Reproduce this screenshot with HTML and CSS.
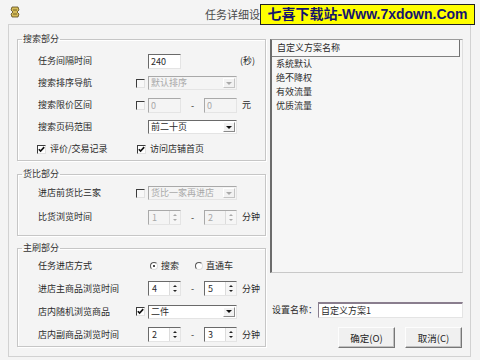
FILE: index.html
```html
<!DOCTYPE html>
<html lang="zh-CN">
<head>
    <meta charset="UTF-8">
    <title>任务详细设置</title>
    <link rel="stylesheet" href="styles.css">
</head>
<body>
    <div class="titlebar">
        <svg class="app-icon" width="10" height="12" viewBox="0 0 10 12">
            <path d="M2 1h6l1 3-2 2 2 2-1 3H2L1 8l2-2-2-2z" fill="#d4bb58" stroke="#5a4a1c" stroke-width="0.8"/>
            <path d="M3 4h4M3 8h4" stroke="#5a4a1c" stroke-width="0.8"/>
        </svg>
        <div class="title">任务详细设置</div>
        <div></div>
        <div class="watermark">七喜下载站-Www.7xdown.Com</div>
    </div>

    <div class="frame">
        <div class="left-col">
            <fieldset class="group g-search">
                <legend>搜索部分</legend>
                <div class="rows">
                    <div class="row">
                        <span class="lbl">任务间隔时间</span><span class="slot"></span>
                        <span class="edit w-num">240</span>
                        <span class="unit sec">(秒)</span>
                    </div>
                    <div class="row">
                        <span class="lbl">搜索排序导航</span>
                        <span class="slot"><span class="cb"></span></span>
                        <span class="combo off"><span class="val">默认排序</span><span class="drop"><span class="tri"></span></span></span>
                    </div>
                    <div class="row">
                        <span class="lbl">搜索限价区间</span>
                        <span class="slot"><span class="cb"></span></span>
                        <span class="edit w-num off">0</span>
                        <span class="dash">-</span>
                        <span class="edit w-num off">0</span>
                        <span class="unit">元</span>
                    </div>
                    <div class="row">
                        <span class="lbl">搜索页码范围</span><span class="slot"></span>
                        <span class="combo"><span class="val">前二十页</span><span class="drop"><span class="tri"></span></span></span>
                    </div>
                    <div class="row">
                        <span class="check-item first">
                            <span class="cb on"><svg width="7" height="7" viewBox="0 0 7 7"><path d="M0.8 3.2l1.8 1.9 3.6-4" fill="none" stroke="#111" stroke-width="1.6"/></svg></span>
                            评价/交易记录
                        </span>
                        <span class="check-item">
                            <span class="cb on"><svg width="7" height="7" viewBox="0 0 7 7"><path d="M0.8 3.2l1.8 1.9 3.6-4" fill="none" stroke="#111" stroke-width="1.6"/></svg></span>
                            访问店铺首页
                        </span>
                    </div>
                </div>
            </fieldset>

            <fieldset class="group g-compare">
                <legend>货比部分</legend>
                <div class="rows">
                    <div class="row tall">
                        <span class="lbl">进店前货比三家</span>
                        <span class="slot"><span class="cb"></span></span>
                        <span class="combo off"><span class="val">货比一家再进店</span><span class="drop"><span class="tri"></span></span></span>
                    </div>
                    <div class="row tall">
                        <span class="lbl">比货浏览时间</span><span class="slot"></span>
                        <span class="spin off"><span class="val">1</span><span class="arrows"><span class="up"></span><span class="down"></span></span></span>
                        <span class="dash">-</span>
                        <span class="spin off"><span class="val">2</span><span class="arrows"><span class="up"></span><span class="down"></span></span></span>
                        <span class="unit">分钟</span>
                    </div>
                </div>
            </fieldset>

            <fieldset class="group g-main">
                <legend>主刷部分</legend>
                <div class="rows">
                    <div class="row mid">
                        <span class="lbl">任务进店方式</span><span class="slot"></span>
                        <span class="radio-item"><span class="rb on"></span>搜索</span>
                        <span class="radio-item"><span class="rb"></span>直通车</span>
                    </div>
                    <div class="row mid">
                        <span class="lbl">进店主商品浏览时间</span><span class="slot"></span>
                        <span class="spin"><span class="val">4</span><span class="arrows"><span class="up"></span><span class="down"></span></span></span>
                        <span class="dash">-</span>
                        <span class="spin"><span class="val">5</span><span class="arrows"><span class="up"></span><span class="down"></span></span></span>
                        <span class="unit">分钟</span>
                    </div>
                    <div class="row mid">
                        <span class="lbl">店内随机浏览商品</span>
                        <span class="slot"><span class="cb on"><svg width="7" height="7" viewBox="0 0 7 7"><path d="M0.8 3.2l1.8 1.9 3.6-4" fill="none" stroke="#111" stroke-width="1.6"/></svg></span></span>
                        <span class="combo"><span class="val">二件</span><span class="drop"><span class="tri"></span></span></span>
                    </div>
                    <div class="row mid">
                        <span class="lbl">店内副商品浏览时间</span><span class="slot"></span>
                        <span class="spin"><span class="val">2</span><span class="arrows"><span class="up"></span><span class="down"></span></span></span>
                        <span class="dash">-</span>
                        <span class="spin"><span class="val">3</span><span class="arrows"><span class="up"></span><span class="down"></span></span></span>
                        <span class="unit">分钟</span>
                    </div>
                </div>
            </fieldset>
        </div>

        <div class="right-col">
            <div class="listview">
                <div class="list-head">自定义方案名称</div>
                <ul class="list-items">
                    <li>系统默认</li>
                    <li>绝不降权</li>
                    <li>有效流量</li>
                    <li>优质流量</li>
                </ul>
            </div>
            <div class="name-row">
                <span class="name-lbl">设置名称：</span>
                <span class="name-input">自定义方案1</span>
            </div>
            <div class="buttons">
                <button class="btn">确定(O)</button>
                <button class="btn">取消(C)</button>
            </div>
        </div>
    </div>
</body>
</html>
```

FILE: styles.css
```css
* {
    margin: 0;
    padding: 0;
    box-sizing: border-box;
}

html, body {
    width: 480px;
    height: 360px;
    overflow: hidden;
}

body {
    background-color: #f4f4f4;
    font-family: "Noto Sans CJK SC", "Liberation Sans", sans-serif;
    font-size: 9px;
    color: #2a2a2a;
}

/* title bar */
.titlebar {
    height: 24px;
    display: grid;
    grid-template-columns: 1fr auto 1fr;
    align-items: center;
    position: relative;
}

.app-icon {
    display: block;
    margin-left: 10px;
}

.title {
    font-size: 11px;
    line-height: 14px;
    color: #4a4a4a;
    padding-top: 4px;
    margin-left: -4px;
}

.watermark {
    position: absolute;
    left: 260px;
    top: 4px;
    width: 215px;
    height: 21px;
    background-color: #ffff00;
    border: 1px solid #222;
    font-family: "Liberation Sans", "Noto Sans CJK SC", sans-serif;
    font-weight: bold;
    font-size: 14px;
    line-height: 19px;
    color: #14146e;
    text-align: center;
    white-space: nowrap;
}

/* window body */
.frame {
    margin-left: 8px;
    width: 463px;
    height: 333px;
    border: 1px solid #d2d2d2;
    display: flex;
    gap: 4px;
    padding: 8px 7px 0 8px;
}

.left-col {
    width: 249px;
    flex-shrink: 0;
}

.group {
    border: 1px solid #c6c6c6;
    box-shadow: inset 1px 1px 0 #fff, 1px 1px 0 #fff;
}

.group legend {
    margin-left: 4px;
    padding: 0 1px;
    line-height: 12px;
    color: #333;
}

.rows {
    padding-left: 20px;
}

.g-search .rows {
    padding-top: 5px;
}

.g-compare {
    margin-top: 7px;
}

.g-compare .rows {
    padding-top: 1px;
    padding-bottom: 6px;
}

.g-main {
    margin-top: 6px;
}

.row {
    display: flex;
    align-items: center;
    height: 22px;
}

.row.tall {
    height: 24px;
}

.row.mid {
    height: 23px;
}

.lbl {
    width: 95px;
    line-height: 12px;
}

.slot {
    width: 15px;
    display: flex;
    align-items: center;
    padding-left: 3px;
}

/* checkbox & radio */
.cb {
    width: 9px;
    height: 9px;
    display: flex;
    align-items: center;
    justify-content: center;
    border-top: 1px solid #3c3c3c;
    border-left: 1px solid #3c3c3c;
    border-right: 1px solid #e2e2e2;
    border-bottom: 1px solid #e2e2e2;
    background-color: #f8f8f8;
}

.cb.on {
    background-color: #fff;
}

.cb svg {
    display: block;
}

.check-item {
    display: flex;
    align-items: center;
    gap: 4px;
    line-height: 12px;
}

.check-item.first {
    width: 100px;
    margin-left: -1px;
}

.radio-item {
    display: flex;
    align-items: center;
    gap: 3px;
    line-height: 12px;
    margin-left: 2px;
    width: 43px;
}

.rb {
    width: 8px;
    height: 8px;
    border-radius: 50%;
    border: 1px solid;
    border-color: #555 #ddd #ddd #555;
    background-color: #fff;
    position: relative;
}

.rb.on::after {
    content: "";
    position: absolute;
    left: 2px;
    top: 2px;
    width: 2px;
    height: 2px;
    border-radius: 50%;
    background-color: #111;
}

/* edit boxes */
.edit {
    height: 15px;
    line-height: 13px;
    padding-left: 2px;
    background-color: #fff;
    border-top: 1px solid #6a6a6a;
    border-left: 1px solid #6a6a6a;
    border-right: 1px solid #e4e4e4;
    border-bottom: 1px solid #e4e4e4;
}

.edit.off {
    background-color: #f4f4f4;
    color: #a8a8a8;
    border-color: #a9a9a9 #e4e4e4 #e4e4e4 #a9a9a9;
}

.w-num {
    width: 33px;
}

.dash {
    width: 23px;
    text-align: center;
}

.unit {
    margin-left: 5px;
    line-height: 12px;
}

.unit.sec {
    margin-left: 59px;
}

/* combo boxes */
.combo {
    width: 89px;
    height: 14px;
    display: flex;
    background-color: #fff;
    border-top: 1px solid #6a6a6a;
    border-left: 1px solid #6a6a6a;
    border-right: 1px solid #e4e4e4;
    border-bottom: 1px solid #e4e4e4;
}

.combo .val {
    flex: 1;
    padding-left: 2px;
    line-height: 12px;
}

.combo .drop {
    width: 12px;
    margin: 1px;
    display: flex;
    align-items: center;
    justify-content: center;
    background-color: #f2f2f2;
    border: 1px solid;
    border-color: #fff #8a8a8a #8a8a8a #fff;
}

.tri {
    width: 0;
    height: 0;
    border-left: 3px solid transparent;
    border-right: 3px solid transparent;
    border-top: 3px solid #111;
}

.combo.off {
    background-color: #f4f4f4;
    color: #a8a8a8;
    border-color: #a9a9a9 #e4e4e4 #e4e4e4 #a9a9a9;
}

.combo.off .drop {
    border-color: #fff #c4c4c4 #c4c4c4 #fff;
}

.combo.off .tri {
    border-top-color: #aaa;
}

/* spin boxes */
.spin {
    width: 33px;
    height: 15px;
    display: flex;
    background-color: #fff;
    border-top: 1px solid #6a6a6a;
    border-left: 1px solid #6a6a6a;
    border-right: 1px solid #e4e4e4;
    border-bottom: 1px solid #e4e4e4;
}

.spin .val {
    flex: 1;
    padding-left: 3px;
    line-height: 13px;
}

.spin .arrows {
    width: 11px;
    display: flex;
    flex-direction: column;
    justify-content: space-evenly;
    align-items: center;
    border-left: 1px solid #dcdcdc;
    background-color: #f6f6f6;
}

.arrows .up,
.arrows .down {
    width: 0;
    height: 0;
    border-left: 2px solid transparent;
    border-right: 2px solid transparent;
}

.arrows .up {
    border-bottom: 2px solid #222;
}

.arrows .down {
    border-top: 2px solid #222;
}

.spin.off {
    background-color: #f4f4f4;
    color: #a8a8a8;
    border-color: #a9a9a9 #e4e4e4 #e4e4e4 #a9a9a9;
}

.spin.off .up {
    border-bottom-color: #aaa;
}

.spin.off .down {
    border-top-color: #aaa;
}

/* right column */
.right-col {
    width: 193px;
    flex-shrink: 0;
    padding-top: 6px;
}

.listview {
    height: 234px;
    background-color: #f6f6f6;
    border-left: 2px solid #6c6c6c;
    border-top: 1px solid #9c9c9c;
    border-right: 1px solid #dedede;
    border-bottom: 1px solid #c8c8c8;
}

.list-head {
    width: 188px;
    height: 17px;
    padding-left: 5px;
    line-height: 15px;
    border-right: 1px solid #707070;
    border-bottom: 1px solid #808080;
    background-color: #f8f8f8;
}

.list-items {
    list-style: none;
    padding-left: 4px;
}

.list-items li {
    line-height: 14px;
}

.name-row {
    margin-top: 29px;
    display: flex;
    align-items: center;
    padding-left: 2px;
}

.name-lbl {
    width: 46px;
    line-height: 12px;
}

.name-input {
    flex: 1;
    height: 16px;
    line-height: 13px;
    padding-left: 2px;
    background-color: #fff;
    border-top: 2px solid #8a7e8e;
    border-left: 1px solid #8a7e8e;
    border-right: 1px solid #e4e4e4;
    border-bottom: 1px solid #e4e4e4;
}

.buttons {
    margin-top: 9px;
    display: flex;
    justify-content: flex-end;
    gap: 10px;
    padding-right: 1px;
}

.btn {
    width: 57px;
    height: 21px;
    font-family: "Noto Sans CJK SC", "Liberation Sans", sans-serif;
    font-size: 9.5px;
    color: #222;
    background-color: #f0f0f0;
    border: 1px solid;
    border-color: #fdfdfd #777 #777 #fdfdfd;
    box-shadow: inset -1px -1px 0 #c0c0c0;
}
```
